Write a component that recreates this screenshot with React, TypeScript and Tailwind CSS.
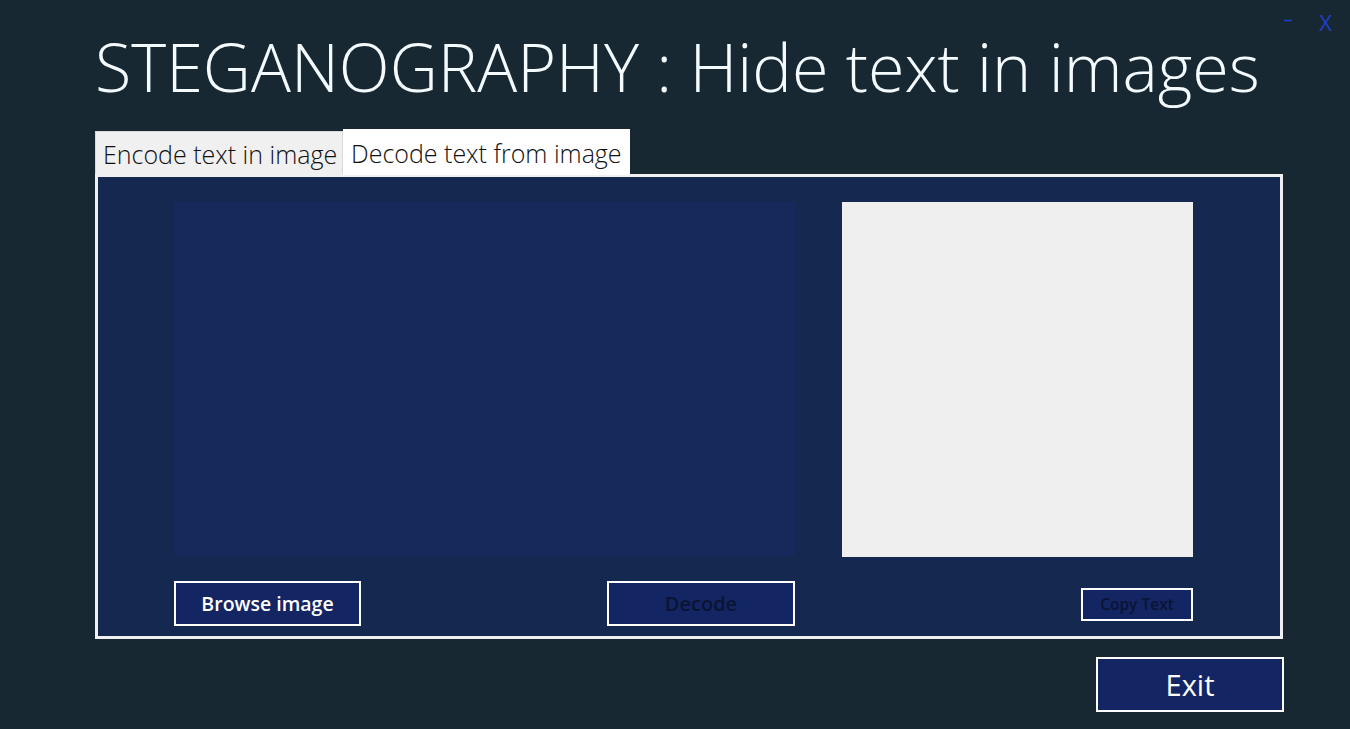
import React from 'react';

export default function App() {
  return (
    <div className="relative h-[729px] w-[1350px] overflow-hidden bg-[#172832] font-['Open_Sans',sans-serif]">
      <div className="absolute right-[18px] top-[5px] flex items-start gap-[26px] text-[#1f3fc9]">
        <span className="text-[20px] leading-[28px]">–</span>
        <span className="text-[22px] leading-[34px]">X</span>
      </div>

      <div className="flex flex-col pl-[95px]">
        <h1 className="mt-[21px] h-[108px] text-[66.5px] font-[350] leading-[90px] text-[#f4fbff]">
          STEGANOGRAPHY : Hide text in images
        </h1>

        <div className="flex items-end">
          <div className="flex h-[43px] w-[248px] items-center border border-b-0 border-[#d9d9d9] bg-[#f0f0f0] pl-[7px] pt-[4px] text-[25px] font-light text-[#111]">
            Encode text in image
          </div>
          <div className="z-10 -mb-[1px] flex h-[46px] w-[287px] items-center bg-white pl-[8px] pt-[3px] text-[25px] font-light text-[#111]">
            Decode text from image
          </div>
        </div>

        <div className="flex h-[465px] w-[1188px] flex-col border-[3px] border-[#f0f0f0] bg-[#15284f]">
          <div className="mt-[25px] flex">
            <div className="ml-[76px] h-[354px] w-[621px] bg-[#16295a]" />
            <div className="ml-[47px] h-[355px] w-[351px] bg-[#efefef]" />
          </div>
          <div className="mt-[24px] flex items-start">
            <button className="ml-[76px] h-[45px] w-[187px] border-2 border-white bg-[#132563] text-[19.5px] font-semibold text-white">
              Browse image
            </button>
            <button className="ml-[246px] h-[45px] w-[188px] border-2 border-white bg-[#132563] text-[20px] font-semibold text-[#0a1433]">
              Decode
            </button>
            <button className="ml-[286px] mt-[7px] h-[33px] w-[112px] border-2 border-white bg-[#132563] text-[15.5px] font-semibold text-[#0a1433]">
              Copy Text
            </button>
          </div>
        </div>

        <div className="mt-[18px] flex">
          <button className="ml-[1001px] h-[55px] w-[188px] border-2 border-white bg-[#132563] text-[29px] text-white">
            Exit
          </button>
        </div>
      </div>
    </div>
  );
}
